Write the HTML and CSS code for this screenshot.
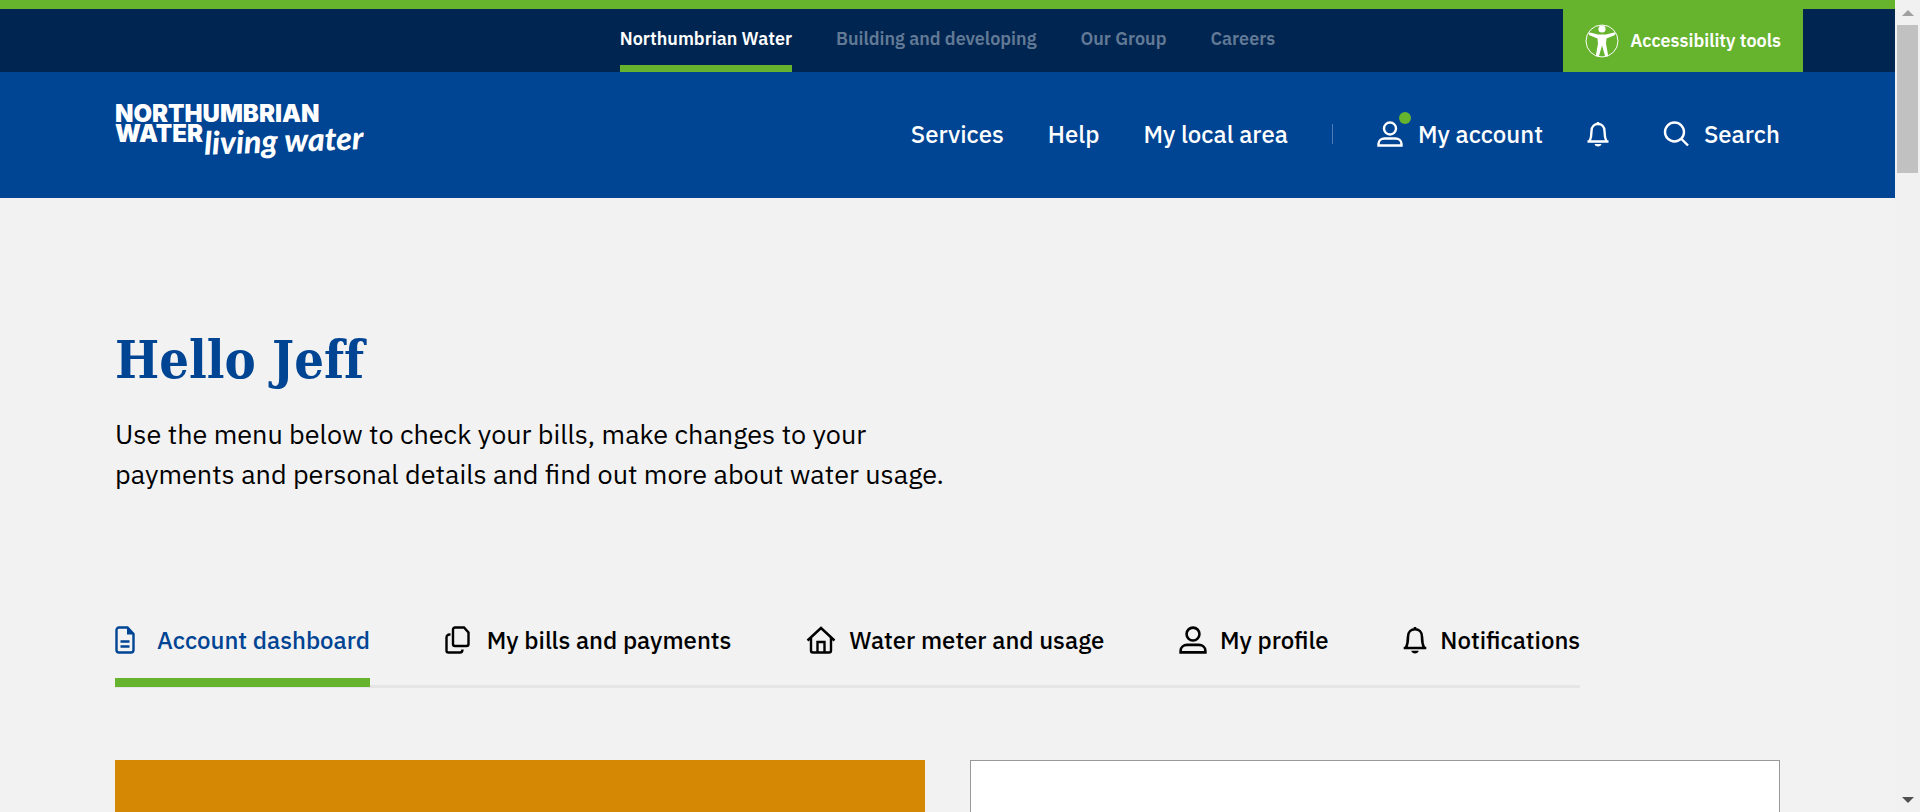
FILE: index.html
```html
<!DOCTYPE html>
<html lang="en">
<head>
<meta charset="utf-8">
<meta name="viewport" content="width=device-width, initial-scale=1">
<title>Account dashboard | Northumbrian Water</title>
<link rel="stylesheet" href="styles.css">
</head>
<body>
<svg class="sprite" aria-hidden="true">
  <symbol id="user" viewBox="0 0 26 26"><circle cx="13" cy="7.500" r="6"/><path d="M1.500 24.500v-1.500c0-3.500 3-5.500 6-5.500h11c3 0 6 2 6 5.500v1.500z"/></symbol>
  <symbol id="bell" viewBox="1 0 22 26"><path d="M1.500 20.500h21M3.500 20.500c1.500-3 2-5 2-10.500 0-4.500 3-7 6.500-7s6.500 2.500 6.500 7c0 5.500.5 7.500 2 10.500M12 1v2"/><path class="solid" d="M8.500 23h7c-.5 1.700-1.800 2.500-3.500 2.500s-3-.8-3.500-2.500z"/></symbol>
  <symbol id="search" viewBox="0 0 26 26"><circle cx="11.500" cy="11" r="9.500"/><path d="M18 17.500l7 7"/></symbol>
</svg>
<div class="window">
  <div class="page">
    <header>
      <div class="group-bar">
        <nav class="group-nav" aria-label="Group sites">
          <a class="current" href="#">Northumbrian Water</a>
          <a href="#">Building and developing</a>
          <a href="#">Our Group</a>
          <a href="#">Careers</a>
        </nav>
        <button class="access" type="button">
          <svg class="access-icon" viewBox="0 0 34 34" aria-hidden="true">
            <circle cx="17" cy="17" r="16" fill="none" stroke="currentColor"/>
            <circle cx="17" cy="5" r="3.600" fill="currentColor"/>
            <path d="M5 8.500l8 2h8l8-2c1.500-.2 2 2 .5 2.800l-8 3.200-.5 5 2.200 12.300c-1 .8-2.400.9-3.200.2L17 21.500 14 32c-.8.700-2.200.6-3.200-.2L13 19.500l-.5-5-8-3.200C3 10.500 3.500 8.300 5 8.500z" fill="currentColor"/>
          </svg>
          Accessibility tools
        </button>
      </div>
      <div class="main-bar">
        <a class="logo" href="#">
          <span class="logo-name">NORTHUMBRIAN</span>
          <span class="logo-row"><span class="logo-name">WATER</span><span class="logo-script">living water</span></span>
        </a>
        <nav class="main-nav" aria-label="Main">
          <a href="#">Services</a>
          <a href="#">Help</a>
          <a href="#">My local area</a>
          <span class="divider"></span>
          <a class="account" href="#"><svg class="icon" aria-hidden="true"><use href="#user"/></svg>My account<span class="dot"></span></a>
          <a class="alerts" href="#" aria-label="Notifications"><svg class="icon bell" aria-hidden="true"><use href="#bell"/></svg></a>
          <a href="#"><svg class="icon" aria-hidden="true"><use href="#search"/></svg>Search</a>
        </nav>
      </div>
    </header>
    <main>
      <h1>Hello Jeff</h1>
      <p class="intro">Use the menu below to check your bills, make changes to your payments and personal details and find out more about water usage.</p>
      <nav class="tabs" aria-label="Account">
        <a class="current" href="#">
          <svg class="tab-icon page-icon" viewBox="0 0 20 28" aria-hidden="true"><path d="M12.500 1.500H4A2.500 2.500 0 0 0 1.500 4v20A2.500 2.500 0 0 0 4 26.500h12a2.500 2.500 0 0 0 2.500-2.500V8z"/><path d="M5.500 15.500h9M5.500 20.500h9"/><path class="solid" d="M12 1.500L19 8.500H12z"/></svg>
          Account dashboard</a>
        <a href="#">
          <svg class="tab-icon copy-icon" viewBox="0 0 25 28" aria-hidden="true"><path d="M10 1.500h9l4.500 5V18a2 2 0 0 1-2 2H10a2 2 0 0 1-2-2V3.500a2 2 0 0 1 2-2z"/><path d="M5.500 8.500h-1a3 3 0 0 0-3 3v13a2 2 0 0 0 2 2h11.500c1.500 0 2.500-1 2.500-3"/></svg>
          My bills and payments</a>
        <a href="#">
          <svg class="tab-icon home-icon" viewBox="0 0 30 28" aria-hidden="true"><path d="M1.500 14.500L15 2l13.500 12.500M5 12v12.500a2 2 0 0 0 2 2h16a2 2 0 0 0 2-2V12M11.500 26v-10h7v10"/></svg>
          Water meter and usage</a>
        <a href="#"><svg class="tab-icon" aria-hidden="true"><use href="#user"/></svg>My profile</a>
        <a href="#"><svg class="tab-icon bell-icon" aria-hidden="true"><use href="#bell"/></svg>Notifications</a>
      </nav>
      <div class="cards">
        <section class="card balance"></section>
        <section class="card"></section>
      </div>
    </main>
  </div>
  <div class="scrollbar" aria-hidden="true">
    <span class="arrow up"></span>
    <span class="thumb"></span>
    <span class="arrow down"></span>
  </div>
</div>
</body>
</html>
```
FILE: styles.css
```css
* { box-sizing: border-box; }
body {
  margin: 0;
  background: #f2f2f2;
  color: #000;
  font-family: "IBM Plex Sans", "Noto Sans", sans-serif;
}
a { color: inherit; text-decoration: none; }
.sprite { display: none; }
svg { fill: none; stroke: currentColor; stroke-width: 2.4; flex: none; }
.solid { fill: currentColor; stroke: none; }

.window { display: flex; height: 100vh; overflow: hidden; }
.page { flex: 1; min-width: 0; overflow: hidden; }

.group-bar {
  position: relative;
  display: flex;
  justify-content: center;
  height: 72px;
  border-top: 9px solid #66b32e;
  background: #002550;
}
.group-nav { display: flex; gap: 44px; font-size: 18px; font-weight: 600; color: #627a96; }
.group-nav a { display: flex; align-items: center; padding-top: 2px; border-bottom: 7px solid transparent; }
.group-nav .current { color: #fff; border-color: #66b32e; }
.access {
  position: absolute;
  right: 92px;
  top: 0;
  bottom: 0;
  display: flex;
  align-items: center;
  gap: 11px;
  padding: 0 22px;
  border: 0;
  background: #66b32e;
  color: #fff;
  font: 600 18px "IBM Plex Sans", "Noto Sans", sans-serif;
}
.access-icon { width: 34px; height: 34px; stroke: none; stroke-width: 1; }

.main-bar {
  display: flex;
  align-items: center;
  justify-content: space-between;
  height: 126px;
  padding: 0 115px 2px;
  background: #004494;
  color: #fff;
}
.logo { display: block; height: 60px; }
.logo-name { display: block; font: 900 24px/20px Inter, sans-serif; }
.logo-row { display: flex; }
.logo-script { margin-left: 1px; font: italic 900 32px/32px Lato, sans-serif; white-space: nowrap; transform: rotate(-2deg); }
.main-nav { display: flex; align-items: center; gap: 44px; font: 500 24px/32px "IBM Plex Sans", "Noto Sans", sans-serif; }
.main-nav a { position: relative; display: flex; align-items: center; gap: 15px; }
.icon { width: 26px; height: 26px; }
.bell { width: 22px; }
.alerts { margin-right: 10px; }
.divider { width: 1px; height: 20px; background: #4d7cb4; }
.dot { position: absolute; left: 22px; top: -6px; width: 12px; height: 12px; border-radius: 50%; background: #66b32e; }

main { padding: 126px 115px 0; }
h1 { margin: 0; color: #004494; font: 700 52px/72px "Roboto Slab", "DejaVu Serif Condensed", "DejaVu Serif", serif; font-variant-ligatures: none; }
.intro { max-width: 840px; margin: 18px 0 0; font-size: 27px; font-weight: 400; line-height: 40px; }
.tabs {
  display: flex;
  justify-content: space-between;
  width: 88%;
  margin-top: 130px;
  border-bottom: 3px solid #e5e5e5;
  font-size: 24px;
  font-weight: 500;
  line-height: 32px;
}
.tabs a { display: flex; align-items: center; gap: 13px; margin-bottom: -2px; padding-bottom: 22px; border-bottom: 9px solid transparent; }
.tabs .current { color: #004494; border-color: #66b32e; }
.tab-icon { width: 28px; height: 28px; }
.page-icon { width: 20px; margin-right: 9px; }
.copy-icon { width: 25px; margin-right: 4px; }
.home-icon { width: 30px; }
.bell-icon { width: 24px; }

.cards { display: grid; grid-template-columns: 1fr 1fr; gap: 45px; margin-top: 72px; }
.card { height: 400px; border: 1px solid #999; background: #fff; }
.balance { border: 0; background: #d58804; }

.scrollbar { display: flex; flex-direction: column; align-items: center; width: 25px; padding: 10px 0 9px; background: #f1f1f1; }
.arrow { border: 6px solid transparent; }
.up { border-top: 0; border-bottom-color: #a0a0a0; }
.down { border-bottom: 0; border-top-color: #505050; margin-top: auto; }
.thumb { width: 21px; height: 148px; margin-top: 9px; background: #c1c1c1; }
```
